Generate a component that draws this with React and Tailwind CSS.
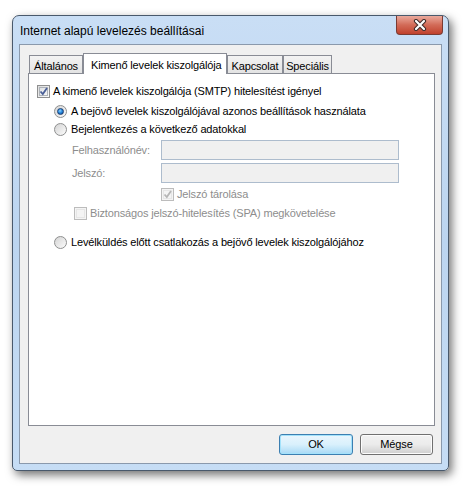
import React from "react";

const font = { fontFamily: '"Liberation Sans", Arial, sans-serif' };

function CheckBox({ checked, disabled }) {
  return (
    <span
      className={`relative flex h-[13px] w-[13px] shrink-0 items-center justify-center border ${
        disabled ? "border-[#bcbcbc] bg-[#f4f4f4]" : "border-[#8e8f8f] bg-gradient-to-br from-[#dcdcdc] to-[#fbfbfb]"
      }`}
    >
      <span
        className={`flex h-[9px] w-[9px] items-center justify-center border ${
          disabled ? "border-[#e6e6e6] bg-[#f4f4f4]" : "border-[#aeb3b9] bg-gradient-to-br from-[#dfe2e5] to-[#f6f6f6]"
        }`}
      >
        {checked && (
          <svg width="11" height="11" viewBox="0 0 11 11" className="absolute left-[0px] top-[0px]">
            <path
              d="M2.5 5.5 L4.8 8 L9 2"
              fill="none"
              stroke={disabled ? "#b6b6b6" : "#4a5f97"}
              strokeWidth="1.8"
            />
          </svg>
        )}
      </span>
    </span>
  );
}

function Radio({ checked }) {
  return (
    <span className="flex h-[13px] w-[13px] shrink-0 items-center justify-center rounded-full border border-[#8e8f8f] bg-gradient-to-br from-[#d4d4d4] to-[#fcfcfc]">
      {checked && (
        <span className="h-[7px] w-[7px] rounded-full border border-[#1b3e73] bg-[radial-gradient(circle_at_40%_35%,#8fd3ff_0%,#2a8ce0_45%,#0d3d86_100%)]" />
      )}
    </span>
  );
}

function Tab({ label, active, width }) {
  if (active) {
    return (
      <div
        className={`relative z-10 -mb-[1px] flex h-[21px] shrink-0 items-start border border-b-0 border-[#898c95] bg-white pl-[7px] pt-[3px] ${width}`}
      >
        {label}
      </div>
    );
  }
  return (
    <div
      className={`mt-[2px] flex h-[18px] shrink-0 items-start justify-center border border-b-0 border-[#898c95] bg-gradient-to-b from-[#f3f3f3] to-[#e3e3e3] pt-[2px] ${width}`}
    >
      {label}
    </div>
  );
}

export default function App() {
  return (
    <div className="h-[488px] w-[466px] bg-white pl-[12px] pt-[15px] text-[11px] tracking-[-0.15px] text-black" style={font}>
      <div className="flex h-[456px] w-[437px] flex-col rounded-t-[7px] rounded-b-[5px] border border-[#49596c] bg-gradient-to-b from-[#c9def5] via-[#bcd5f0] to-[#c6ddf5] shadow-[3px_4px_10px_rgba(0,0,0,0.55)]">
        <div className="flex h-[28px] items-start justify-between pl-[7px]">
          <span className="mt-[8px] text-[12px] leading-[15px] tracking-[0px]">Internet alapú levelezés beállításai</span>
          <div className="mr-[5px] flex h-[19px] w-[47px] items-center justify-center rounded-b-[4px] border border-t-0 border-[#7a3b33] bg-gradient-to-b from-[#e9a99c] via-[#d26a57] to-[#c0402c]">
            <svg width="14" height="12" viewBox="0 0 14 12">
              <path d="M3 2 L11 10 M11 2 L3 10" stroke="#3d2a2a" strokeWidth="4.2" strokeLinecap="round" />
              <path d="M3 2 L11 10 M11 2 L3 10" stroke="#ffffff" strokeWidth="2.2" strokeLinecap="round" />
            </svg>
          </div>
        </div>
        <div className="mx-[6px] mb-[6px] flex flex-1 flex-col border border-[#8a99ac] bg-[#f0f0f0] pl-[8px] pr-[8px] pt-[8px]">
          <div className="flex pl-[1px]">
            <Tab label="Általános" width="w-[54px]" />
            <Tab label="Kimenő levelek kiszolgálója" width="w-[144px]" active />
            <Tab label="Kapcsolat" width="w-[56px]" />
            <Tab label="Speciális" width="w-[49px]" />
          </div>
          <div className="flex h-[353px] w-[407px] flex-col border border-[#898c95] bg-white pl-[8px] pt-[9px]">
            <div className="flex h-[16px] items-center gap-[3px]">
              <CheckBox checked />
              <span>A kimenő levelek kiszolgálója (SMTP) hitelesítést igényel</span>
            </div>
            <div className="ml-[17px] mt-[4px] flex h-[16px] items-center gap-[4px]">
              <Radio checked />
              <span>A bejövő levelek kiszolgálójával azonos beállítások használata</span>
            </div>
            <div className="ml-[17px] mt-[2px] flex h-[16px] items-center gap-[4px]">
              <Radio />
              <span>Bejelentkezés a következő adatokkal</span>
            </div>
            <div className="ml-[35px] mt-[3px] flex items-center text-[#8d8d8d]">
              <span className="w-[89px]">Felhasználónév:</span>
              <div className="h-[20px] w-[238px] border border-[#adbccd] bg-[#f0f0f0]" />
            </div>
            <div className="ml-[35px] mt-[3px] flex items-center text-[#8d8d8d]">
              <span className="w-[89px]">Jelszó:</span>
              <div className="h-[20px] w-[238px] border border-[#adbccd] bg-[#f0f0f0]" />
            </div>
            <div className="ml-[124px] mt-[3px] flex h-[16px] items-center gap-[3px] text-[#8d8d8d]">
              <CheckBox checked disabled />
              <span>Jelszó tárolása</span>
            </div>
            <div className="ml-[37px] mt-[3px] flex h-[16px] items-center gap-[3px] text-[#8d8d8d]">
              <CheckBox disabled />
              <span>Biztonságos jelszó-hitelesítés (SPA) megkövetelése</span>
            </div>
            <div className="ml-[17px] mt-[13px] flex h-[16px] items-center gap-[4px]">
              <Radio />
              <span>Levélküldés előtt csatlakozás a bejövő levelek kiszolgálójához</span>
            </div>
          </div>
          <div className="mt-[8px] flex justify-end gap-[7px] pr-[0px]">
            <button className="h-[21px] w-[74px] rounded-[3px] border border-[#3c7fb1] bg-gradient-to-b from-[#eaf6fd] via-[#d9f0fc] to-[#a7d9f5] shadow-[inset_0_0_0_1px_#a3e2fb]">
              OK
            </button>
            <button className="h-[21px] w-[73px] rounded-[3px] border border-[#707070] bg-gradient-to-b from-[#f2f2f2] via-[#ebebeb] to-[#cfcfcf] shadow-[inset_0_0_0_1px_#fcfcfc]">
              Mégse
            </button>
          </div>
        </div>
      </div>
    </div>
  );
}
